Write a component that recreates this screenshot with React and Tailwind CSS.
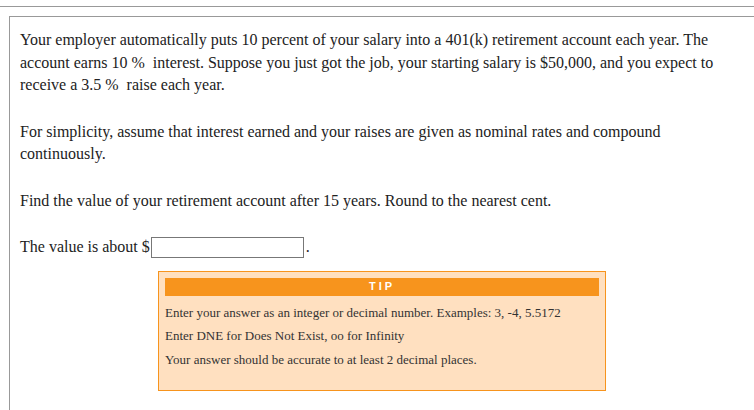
import React from 'react';

export default function App() {
  return (
    <div className="w-[754px] h-[410px] overflow-hidden bg-white text-[#222] font-['Liberation_Serif',serif]">
      <div className="pt-[6px]">
        <div className="h-px bg-[#999]" />
      </div>
      <div className="ml-[9px] mt-[9px] border-l border-t border-[#999] pl-[10px] pt-[12px] h-[400px]">
        <p className="text-[16px] leading-[22.5px] whitespace-nowrap">
          Your employer automatically puts 10 percent of your salary into a 401(k) retirement account each year. The
          <br />
          account earns 10&nbsp;% &nbsp;interest. Suppose you just got the job, your starting salary is $50,000, and you expect to
          <br />
          receive a 3.5&nbsp;% &nbsp;raise each year.
        </p>
        <p className="text-[16px] leading-[22.5px] mt-[24px] whitespace-nowrap">
          For simplicity, assume that interest earned and your raises are given as nominal rates and compound
          <br />
          continuously.
        </p>
        <p className="text-[16px] leading-[22.5px] mt-[24px]">
          Find the value of your retirement account after 15 years. Round to the nearest cent.
        </p>
        <div className="mt-[24px] flex items-center text-[16px] leading-[22.5px]">
          <span>The value is about $</span>
          <input
            type="text"
            className="ml-[1px] w-[153px] h-[21px] border border-[#777] bg-white outline-none"
          />
          <span className="ml-[2px]">.</span>
        </div>
        <div className="ml-[138px] mt-[12px] w-[448px] h-[120px] border border-[#f7941d] bg-[#ffe0c0] p-[6px]">
          <div className="h-[18px] bg-[#f7941d] flex items-center justify-center text-white text-[11px] font-bold tracking-[3px] font-['Liberation_Sans',sans-serif]">
            TIP
          </div>
          <div className="text-[13px] leading-[23.5px] text-[#333] mt-[5px]">
            <div>Enter your answer as an integer or decimal number. Examples: 3, -4, 5.5172</div>
            <div>Enter DNE for Does Not Exist, oo for Infinity</div>
            <div>Your answer should be accurate to at least 2 decimal places.</div>
          </div>
        </div>
      </div>
    </div>
  );
}
